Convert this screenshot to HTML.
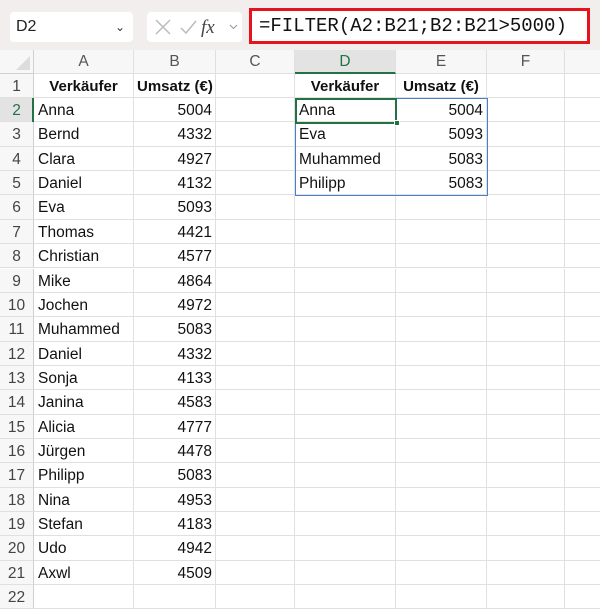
<!DOCTYPE html><html><head><style>
body{margin:0;width:600px;height:605px;overflow:hidden;background:#fff;font-family:"Liberation Sans",sans-serif;position:relative}
.tb{position:absolute;left:0;top:0;width:600px;height:50px;background:#f1eeed}
.nb{position:absolute;left:10px;top:12px;width:123px;height:30px;background:#fff;border-radius:4px;font-size:16px;line-height:30px;padding-left:6px;box-sizing:border-box;color:#222}
.fxb{position:absolute;left:147px;top:12px;width:95px;height:30px;background:#fff;border-radius:4px}
.fm{position:absolute;left:249px;top:8px;width:341px;height:36px;border:3px solid #e5131b;box-sizing:border-box;background:#fff;font-family:"Liberation Mono",monospace;font-size:19px;line-height:30px;padding-left:7px;color:#111;white-space:nowrap}
.r{position:absolute;left:0;height:24.35px;width:600px}
.c{position:absolute;top:0;height:100%;box-sizing:border-box;border-right:1px solid #e0e0e0;border-bottom:1px solid #e0e0e0;font-size:15.5px;line-height:25px;padding:0 4px;color:#111;white-space:nowrap;overflow:hidden}
.n{left:0;width:34px;background:#f7f7f7;color:#444;text-align:center;padding:0;border-right:1px solid #d0d0d0}
.h{background:#f7f7f7;color:#555;text-align:center;line-height:23px}
.num{text-align:right}.b{font-weight:bold;text-align:center;font-size:15px}
.ov{position:absolute;z-index:5;box-sizing:border-box}
</style></head><body>
<div class="tb"></div>
<div class="nb">D2<span style="position:absolute;right:8px;top:0;font-size:12px;color:#333">&#8964;</span></div>
<div style="position:absolute;left:152px;top:16px;font-size:18px;color:#333;font-weight:bold">&#8942;</div>
<div class="fxb"><svg width="95" height="30"><path d="M9 8l14 14M23 8L9 22" stroke="#bbb" stroke-width="1.5"/><path d="M34 16l5 5 10-12" stroke="#bbb" stroke-width="1.5" fill="none"/><text x="54" y="21" font-family="Liberation Serif" font-style="italic" font-size="19" fill="#444">fx</text><path d="M90 13l-3.5 3.5-3.5-3.5" stroke="#999" fill="none"/></svg></div>
<div class="fm">=FILTER(A2:B21;B2:B21&gt;5000)</div>
<div style="position:absolute;left:0;top:50px;width:34px;height:24px;background:#f7f7f7;border-right:1px solid #d0d0d0;border-bottom:1px solid #d0d0d0;box-sizing:border-box"><svg width="33" height="23"><path d="M30 6V20H16Z" fill="#ddd"/></svg></div>
<div class="r" style="top:50px;height:23.7px">
<div class="c h" style="left:34px;width:100px">A</div><div class="c h" style="left:134px;width:82px">B</div><div class="c h" style="left:216px;width:79px">C</div><div class="c h" style="left:295px;width:101px;background:#e3e3e3;color:#217346;border-bottom:2px solid #217346">D</div><div class="c h" style="left:396px;width:91px">E</div><div class="c h" style="left:487px;width:78px">F</div><div class="c h" style="left:565px;width:40px"></div></div>
<div id="rows"></div>
<div class="ov" style="left:295px;top:98px;width:193px;height:98px;border:1px solid #4a7fd0"></div>
<div class="ov" style="left:295px;top:97.5px;width:102px;height:26px;border:2px solid #217346"></div>
<div class="ov" style="left:394px;top:120px;width:6px;height:6px;background:#217346;border:1px solid #fff"></div>
<div class="ov" style="left:32px;top:98px;width:2px;height:24.35px;background:#217346"></div>
<script>
var A=[["Verkäufer","Umsatz (€)"],["Anna",5004],["Bernd",4332],["Clara",4927],["Daniel",4132],["Eva",5093],["Thomas",4421],["Christian",4577],["Mike",4864],["Jochen",4972],["Muhammed",5083],["Daniel",4332],["Sonja",4133],["Janina",4583],["Alicia",4777],["Jürgen",4478],["Philipp",5083],["Nina",4953],["Stefan",4183],["Udo",4942],["Axwl",4509],["",""]];
var D=[["Verkäufer","Umsatz (€)"],["Anna",5004],["Eva",5093],["Muhammed",5083],["Philipp",5083]];
var h="";
for(var i=0;i<22;i++){var t=73.7+i*24.35;var d=D[i]||["",""];var b=i==0?" b":"";
h+='<div class="r" style="top:'+t+'px"><div class="c n" style="'+(i==1?'background:#e3e3e3;color:#217346':'')+'">'+(i+1)+'</div>'+
'<div class="c'+b+'" style="left:34px;width:100px">'+A[i][0]+'</div>'+
'<div class="c num'+b+'" style="left:134px;width:82px;padding:0 3px">'+A[i][1]+'</div>'+
'<div class="c" style="left:216px;width:79px"></div>'+
'<div class="c'+b+'" style="left:295px;width:101px">'+d[0]+'</div>'+
'<div class="c num'+b+'" style="left:396px;width:91px;padding:0 3px">'+d[1]+'</div>'+
'<div class="c" style="left:487px;width:78px"></div><div class="c" style="left:565px;width:40px"></div></div>';}
document.getElementById("rows").innerHTML=h;
</script>
</body></html>
